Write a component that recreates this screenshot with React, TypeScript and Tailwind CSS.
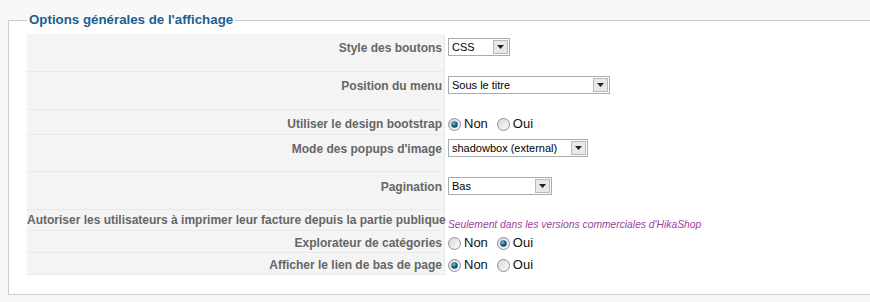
import React from 'react';

const FONT = { fontFamily: '"Liberation Sans", Arial, sans-serif' };

function FakeSelect({ value, width }: { value: string; width: number }) {
  return (
    <div
      className="flex h-[18px] items-center border border-[#a5acb2] bg-white"
      style={{ width }}
    >
      <span className="flex-1 truncate pl-[3px] text-[11px] leading-[16px] text-black">{value}</span>
      <div className="mr-[1px] flex h-[14px] w-[15px] items-center justify-center border border-[#b9b9b9] bg-[#e8e8e8]">
        <svg width="7" height="4" viewBox="0 0 7 4">
          <path d="M0 0h7L3.5 4z" fill="#222" />
        </svg>
      </div>
    </div>
  );
}

function Radio({ checked }: { checked: boolean }) {
  return (
    <svg width="13" height="13" viewBox="0 0 13 13">
      <defs>
        <linearGradient id="rbg" x1="0" y1="0" x2="1" y2="1">
          <stop offset="0" stopColor="#d8d8d8" />
          <stop offset="1" stopColor="#fbfbfb" />
        </linearGradient>
        <radialGradient id="rdot" cx="0.4" cy="0.35" r="0.7">
          <stop offset="0" stopColor="#7ec6e6" />
          <stop offset="0.45" stopColor="#1f6f99" />
          <stop offset="1" stopColor="#0b3550" />
        </radialGradient>
      </defs>
      <circle cx="6.5" cy="6.5" r="6" fill="url(#rbg)" stroke="#8e8f8f" strokeWidth="1" />
      {checked && <circle cx="6.5" cy="6.5" r="3.2" fill="url(#rdot)" />}
    </svg>
  );
}

function RadioPair({ yes }: { yes: boolean }) {
  return (
    <div className="flex items-center text-[13px] leading-[18px] text-[#111]">
      <Radio checked={!yes} />
      <span className="ml-[3px]">Non</span>
      <span className="ml-[9px] flex items-center">
        <Radio checked={yes} />
      </span>
      <span className="ml-[3px]">Oui</span>
    </div>
  );
}

// h = row height incl. bottom border, pt = top padding of the value, lt = top padding of the label
const rows: { label: string; h: number; pt: number; lt: number; content: React.ReactNode }[] = [
  { label: 'Style des boutons', h: 38, pt: 4, lt: 5, content: <FakeSelect value="CSS" width={62} /> },
  { label: 'Position du menu', h: 38, pt: 4, lt: 5, content: <FakeSelect value="Sous le titre" width={162} /> },
  { label: 'Utiliser le design bootstrap', h: 25, pt: 5, lt: 5, content: <RadioPair yes={false} /> },
  {
    label: "Mode des popups d'image",
    h: 37,
    pt: 4,
    lt: 5,
    content: <FakeSelect value="shadowbox (external)" width={140} />,
  },
  { label: 'Pagination', h: 38, pt: 5, lt: 6, content: <FakeSelect value="Bas" width={104} /> },
  {
    label: 'Autoriser les utilisateurs à imprimer leur facture depuis la partie publique',
    h: 21,
    pt: 1,
    lt: 1,
    content: (
      <span className="text-[10.3px] italic leading-[18px] text-[#a0409d]">
        Seulement dans les versions commerciales d'HikaShop
      </span>
    ),
  },
  { label: 'Explorateur de catégories', h: 22, pt: 3, lt: 3, content: <RadioPair yes={true} /> },
  { label: 'Afficher le lien de bas de page', h: 22, pt: 3, lt: 3, content: <RadioPair yes={false} /> },
];

export default function App() {
  return (
    <div className="h-[302px] w-[870px] overflow-hidden bg-[#f8f8f8]" style={FONT}>
      <fieldset className="ml-[8px] mt-[10px] w-[900px] border border-[#cccccc] bg-white pl-[18px] pt-[4px] pb-[19px]">
        <legend className="px-[2px] text-[13.3px] font-bold leading-[20px] text-[#1d5f91]">
          Options générales de l'affichage
        </legend>
        <div className="flex flex-col">
          {rows.map((r) => (
            <div key={r.label} className="flex" style={{ height: r.h }}>
              <div
                className="w-[418px] shrink-0 whitespace-nowrap border-b border-r border-[#e9e9e9] bg-[#f4f4f4] pr-[2px] text-right text-[12px] font-bold leading-[18px] text-[#666]"
                style={{ paddingTop: r.lt }}
              >
                {r.label}
              </div>
              <div className="pl-[3px]" style={{ paddingTop: r.pt }}>
                {r.content}
              </div>
            </div>
          ))}
        </div>
      </fieldset>
    </div>
  );
}
